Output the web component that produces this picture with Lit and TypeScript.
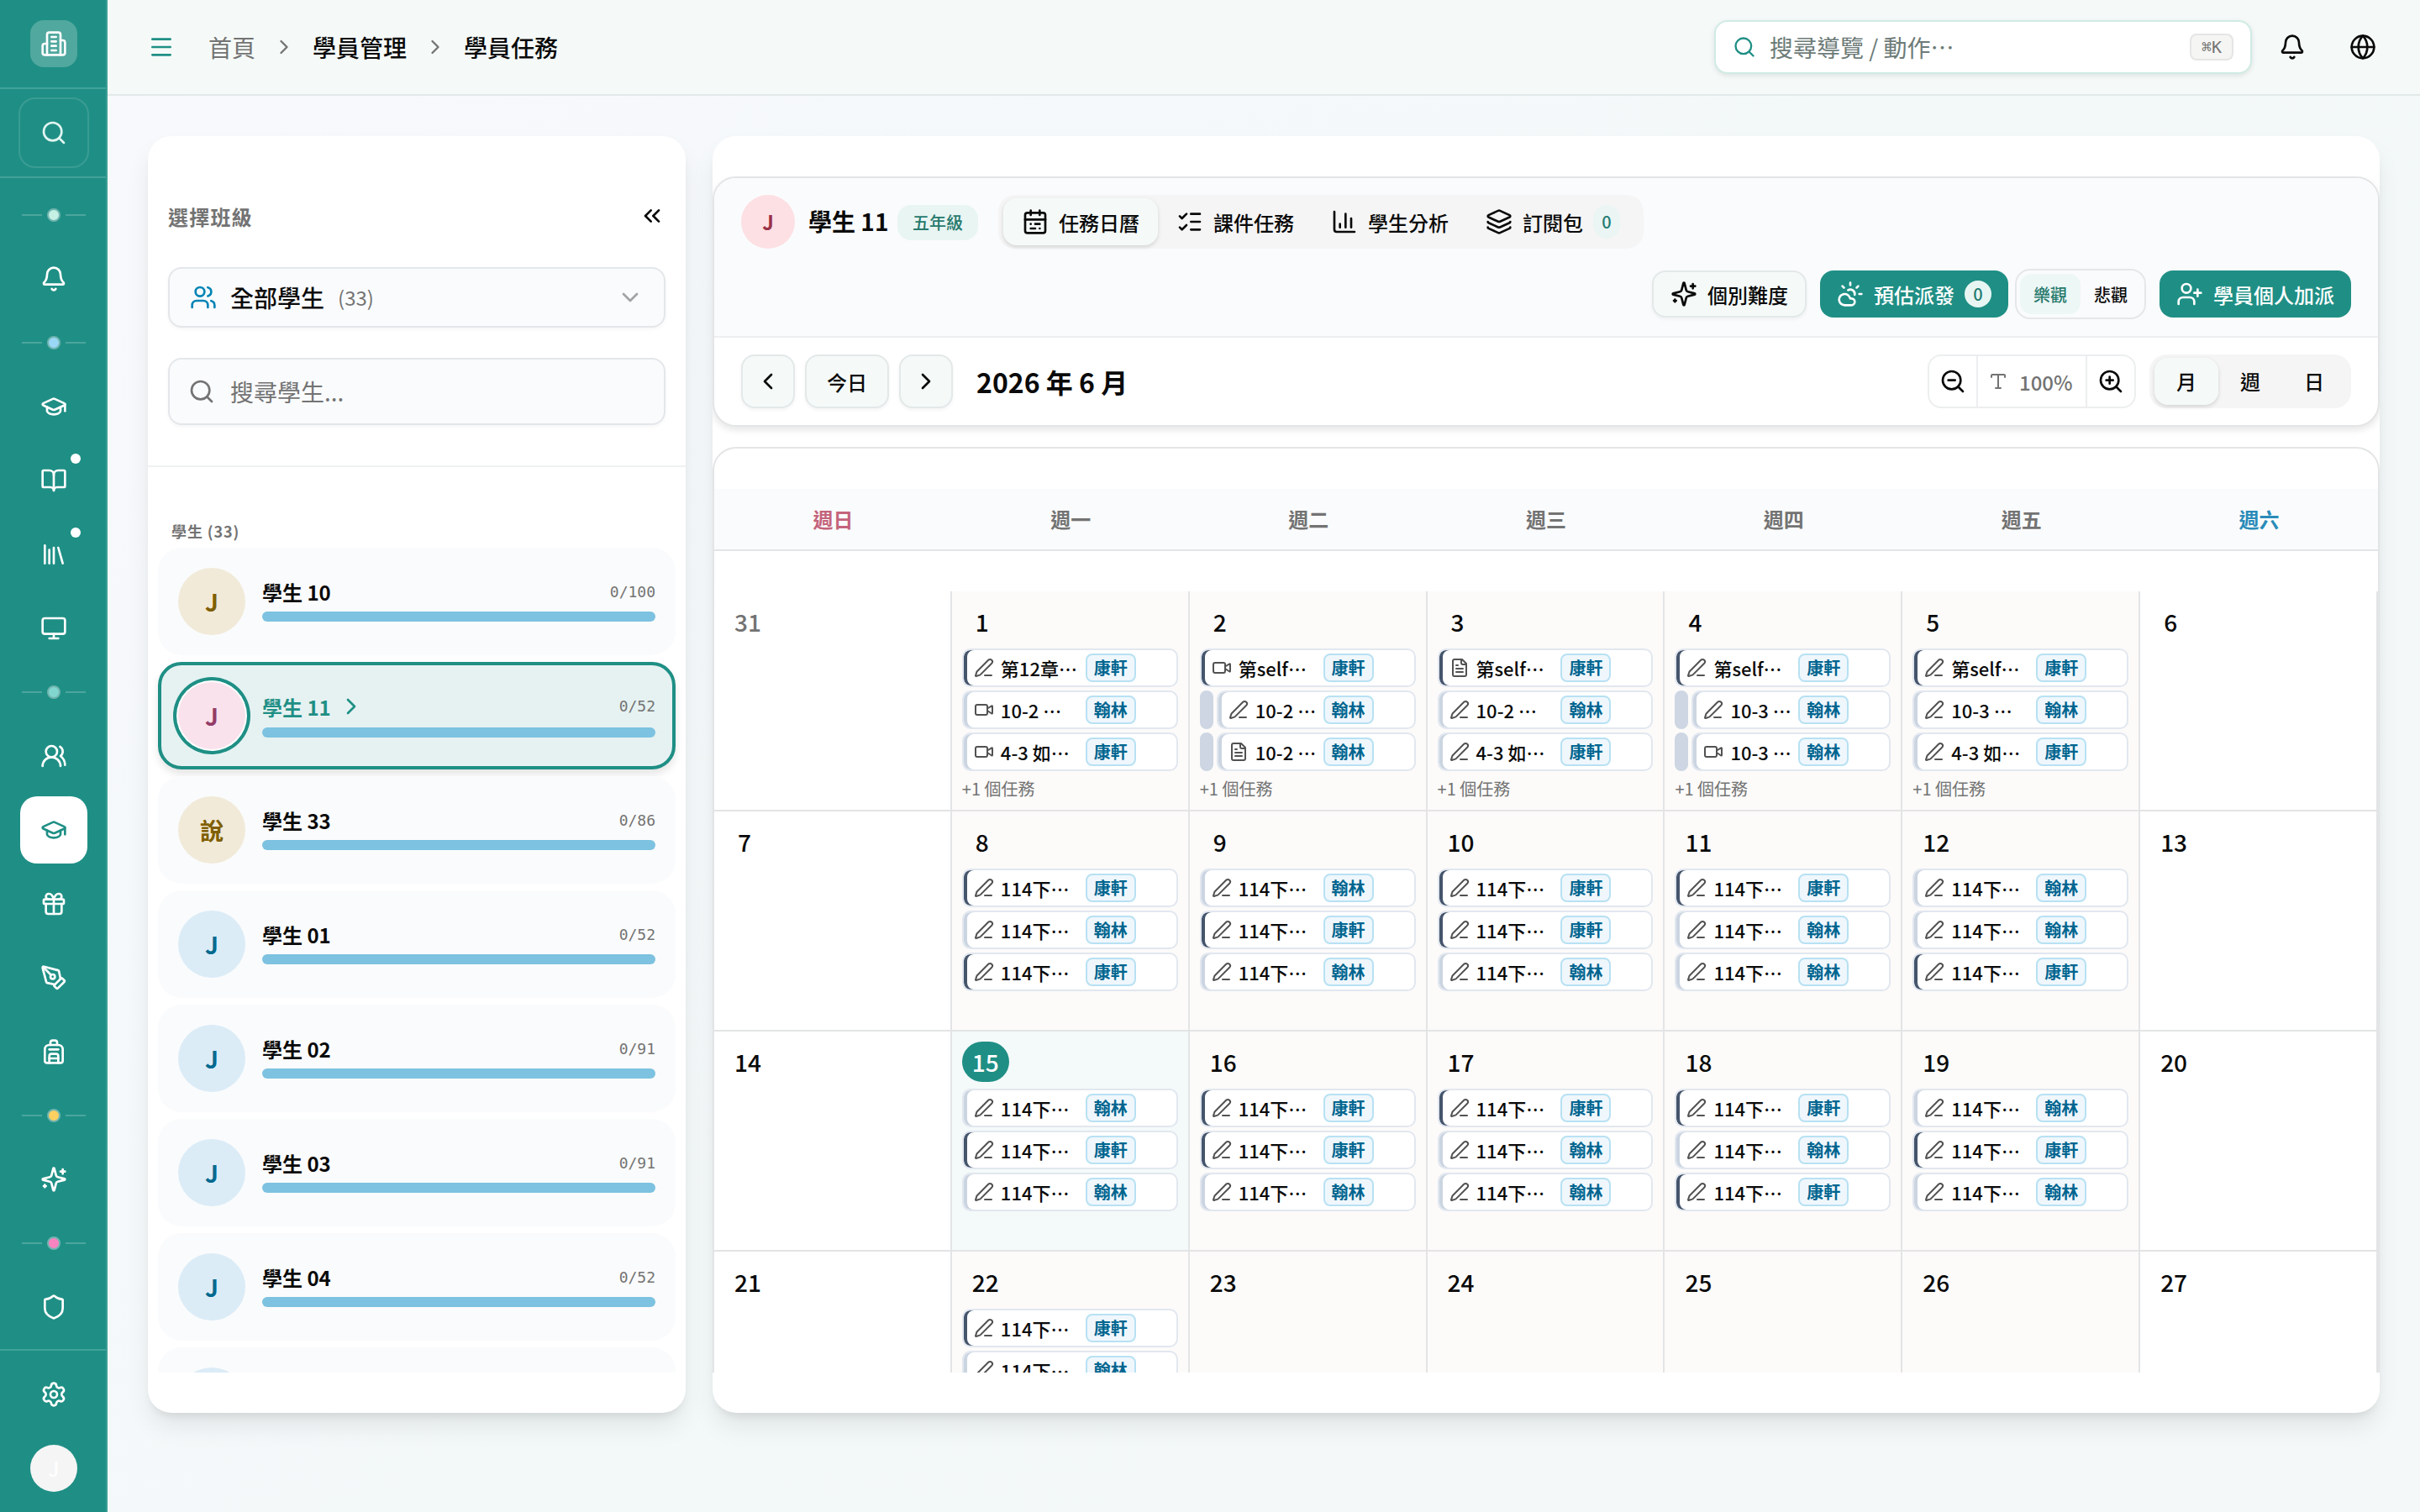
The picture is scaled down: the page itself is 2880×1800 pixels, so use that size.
import { LitElement, css, html, svg, nothing } from 'lit';
import { customElement, property } from 'lit/decorators.js';
import { classMap } from 'lit/directives/class-map.js';

const icons: Record<string, unknown> = {
  building: svg`<path d="M6 22V4a2 2 0 0 1 2-2h8a2 2 0 0 1 2 2v18Z"/><path d="M6 12H4a2 2 0 0 0-2 2v6a2 2 0 0 0 2 2h2"/><path d="M18 9h2a2 2 0 0 1 2 2v9a2 2 0 0 1-2 2h-2"/><path d="M10 6h4M10 10h4M10 14h4M10 18h4"/>`,
  search: svg`<circle cx="11" cy="11" r="8"/><path d="m21 21-4.3-4.3"/>`,
  bell: svg`<path d="M10.268 21a2 2 0 0 0 3.464 0"/><path d="M3.262 15.326A1 1 0 0 0 4 17h16a1 1 0 0 0 .74-1.673C19.41 13.956 18 12.499 18 8A6 6 0 0 0 6 8c0 4.499-1.411 5.956-2.738 7.326"/>`,
  cap: svg`<path d="M21.42 10.922a1 1 0 0 0-.019-1.838L12.83 5.18a2 2 0 0 0-1.66 0L2.6 9.08a1 1 0 0 0 0 1.832l8.57 3.908a2 2 0 0 0 1.66 0z"/><path d="M22 10v6"/><path d="M6 12.5V16a6 3 0 0 0 12 0v-3.5"/>`,
  book: svg`<path d="M12 7v14"/><path d="M3 18a1 1 0 0 1-1-1V4a1 1 0 0 1 1-1h5a4 4 0 0 1 4 4 4 4 0 0 1 4-4h5a1 1 0 0 1 1 1v13a1 1 0 0 1-1 1h-6a3 3 0 0 0-3 3 3 3 0 0 0-3-3z"/>`,
  library: svg`<path d="m16 6 4 14"/><path d="M12 6v14"/><path d="M8 8v12"/><path d="M4 4v16"/>`,
  monitor: svg`<rect width="20" height="14" x="2" y="3" rx="2"/><path d="M8 21h8M12 17v4"/>`,
  usersRound: svg`<path d="M18 21a8 8 0 0 0-16 0"/><circle cx="10" cy="8" r="5"/><path d="M22 20c0-3.37-2-6.5-4-8a5 5 0 0 0-.45-8.3"/>`,
  users: svg`<path d="M16 21v-2a4 4 0 0 0-4-4H6a4 4 0 0 0-4 4v2"/><circle cx="9" cy="7" r="4"/><path d="M22 21v-2a4 4 0 0 0-3-3.87"/><path d="M16 3.13a4 4 0 0 1 0 7.75"/>`,
  gift: svg`<rect x="3" y="8" width="18" height="4" rx="1"/><path d="M12 8v13"/><path d="M19 12v7a2 2 0 0 1-2 2H7a2 2 0 0 1-2-2v-7"/><path d="M7.5 8a2.5 2.5 0 0 1 0-5A4.8 8 0 0 1 12 8a4.8 8 0 0 1 4.5-5 2.5 2.5 0 0 1 0 5"/>`,
  pen: svg`<path d="M15.707 21.293a1 1 0 0 1-1.414 0l-1.586-1.586a1 1 0 0 1 0-1.414l5.586-5.586a1 1 0 0 1 1.414 0l1.586 1.586a1 1 0 0 1 0 1.414z"/><path d="m18 13-1.375-6.874a1 1 0 0 0-.746-.776L3.235 2.028a1 1 0 0 0-1.207 1.207L5.35 15.879a1 1 0 0 0 .776.746L13 18"/><path d="m2.3 2.3 7.286 7.286"/><circle cx="11" cy="11" r="2"/>`,
  backpack: svg`<path d="M4 10a4 4 0 0 1 4-4h8a4 4 0 0 1 4 4v10a2 2 0 0 1-2 2H6a2 2 0 0 1-2-2z"/><path d="M8 10h8"/><path d="M8 18h8"/><path d="M8 22v-6a2 2 0 0 1 2-2h4a2 2 0 0 1 2 2v6"/><path d="M9 6V4a2 2 0 0 1 2-2h2a2 2 0 0 1 2 2v2"/>`,
  sparkles: svg`<path d="M9.937 15.5A2 2 0 0 0 8.5 14.063l-6.135-1.582a.5.5 0 0 1 0-.962L8.5 9.936A2 2 0 0 0 9.937 8.5l1.582-6.135a.5.5 0 0 1 .963 0L14.063 8.5A2 2 0 0 0 15.5 9.937l6.135 1.581a.5.5 0 0 1 0 .964L15.5 14.063a2 2 0 0 0-1.437 1.437l-1.582 6.135a.5.5 0 0 1-.963 0z"/><path d="M20 3v4M22 5h-4M4 17v2M5 18H3"/>`,
  shield: svg`<path d="M20 13c0 5-3.5 7.5-7.66 8.95a1 1 0 0 1-.67-.01C7.5 20.5 4 18 4 13V6a1 1 0 0 1 1-1c2 0 4.5-1.2 6.24-2.72a1.17 1.17 0 0 1 1.52 0C14.51 3.81 17 5 19 5a1 1 0 0 1 1 1z"/>`,
  settings: svg`<path d="M9.671 4.136a2.34 2.34 0 0 1 4.659 0 2.34 2.34 0 0 0 3.319 1.915 2.34 2.34 0 0 1 2.33 4.033 2.34 2.34 0 0 0 0 3.831 2.34 2.34 0 0 1-2.33 4.033 2.34 2.34 0 0 0-3.319 1.915 2.34 2.34 0 0 1-4.659 0 2.34 2.34 0 0 0-3.32-1.915 2.34 2.34 0 0 1-2.33-4.033 2.34 2.34 0 0 0 0-3.831A2.34 2.34 0 0 1 6.35 6.051a2.34 2.34 0 0 0 3.319-1.915"/><circle cx="12" cy="12" r="3"/>`,
  menu: svg`<path d="M4 5h16M4 12h16M4 19h16"/>`,
  right: svg`<path d="m9 18 6-6-6-6"/>`,
  left: svg`<path d="m15 18-6-6 6-6"/>`,
  down: svg`<path d="m6 9 6 6 6-6"/>`,
  collapse: svg`<path d="m11 17-5-5 5-5"/><path d="m18 17-5-5 5-5"/>`,
  globe: svg`<circle cx="12" cy="12" r="10"/><path d="M12 2a14.5 14.5 0 0 0 0 20 14.5 14.5 0 0 0 0-20"/><path d="M2 12h20"/>`,
  calendar: svg`<path d="M8 2v4M16 2v4"/><rect width="18" height="18" x="3" y="4" rx="2"/><path d="M3 10h18"/><path d="M8 14h.01M12 14h4M8 18h4M16 18h.01"/>`,
  checks: svg`<path d="M13 5h8M13 12h8M13 19h8"/><path d="m3 17 2 2 4-4"/><path d="m3 7 2 2 4-4"/>`,
  chart: svg`<path d="M3 3v16a2 2 0 0 0 2 2h16"/><path d="M18 17V9M13 17V5M8 17v-3"/>`,
  layers: svg`<path d="M12.83 2.18a2 2 0 0 0-1.66 0L2.6 6.08a1 1 0 0 0 0 1.83l8.58 3.91a2 2 0 0 0 1.66 0l8.58-3.9a1 1 0 0 0 0-1.83z"/><path d="M2 12a1 1 0 0 0 .58.91l8.6 3.91a2 2 0 0 0 1.65 0l8.58-3.9A1 1 0 0 0 22 12"/><path d="M2 17a1 1 0 0 0 .58.91l8.6 3.91a2 2 0 0 0 1.65 0l8.58-3.9A1 1 0 0 0 22 17"/>`,
  cloudSun: svg`<path d="M12 2v2"/><path d="m4.93 4.93 1.41 1.41"/><path d="M20 12h2"/><path d="m19.07 4.93-1.41 1.41"/><path d="M15.947 12.65a4 4 0 0 0-5.925-4.128"/><path d="M13 22H7a5 5 0 1 1 4.9-6H13a3 3 0 0 1 0 6Z"/>`,
  userPlus: svg`<path d="M16 21v-2a4 4 0 0 0-4-4H6a4 4 0 0 0-4 4v2"/><circle cx="9" cy="7" r="4"/><path d="M19 8v6M22 11h-6"/>`,
  zoomOut: svg`<circle cx="11" cy="11" r="8"/><path d="m21 21-4.35-4.35M8 11h6"/>`,
  zoomIn: svg`<circle cx="11" cy="11" r="8"/><path d="m21 21-4.35-4.35M11 8v6M8 11h6"/>`,
  type: svg`<path d="M12 4v16"/><path d="M4 7V5a1 1 0 0 1 1-1h14a1 1 0 0 1 1 1v2"/><path d="M9 20h6"/>`,
  pencil: svg`<path d="M13 21h8"/><path d="M21.174 6.812a1 1 0 0 0-3.986-3.987L3.842 16.174a2 2 0 0 0-.5.83l-1.321 4.352a.5.5 0 0 0 .623.622l4.353-1.32a2 2 0 0 0 .83-.497z"/>`,
  video: svg`<path d="m16 13 5.223 3.482a.5.5 0 0 0 .777-.416V7.87a.5.5 0 0 0-.752-.432L16 10.5"/><rect x="2" y="6" width="14" height="12" rx="2"/>`,
  file: svg`<path d="M15 2H6a2 2 0 0 0-2 2v16a2 2 0 0 0 2 2h12a2 2 0 0 0 2-2V7Z"/><path d="M14 2v4a2 2 0 0 0 2 2h4"/><path d="M10 9H8M16 13H8M16 17H8"/>`,
};

const icon = (name: string, size = 32) => html`
  <svg width=${size} height=${size} viewBox="0 0 24 24" fill="none" stroke="currentColor"
    stroke-width="2" stroke-linecap="round" stroke-linejoin="round">${icons[name]}</svg>
`;

type NavEntry = { icon?: string; dot?: string; badge?: boolean; active?: boolean };

const nav: NavEntry[] = [
  { dot: 'mint' },
  { icon: 'bell' },
  { dot: 'sky' },
  { icon: 'cap' },
  { icon: 'book', badge: true },
  { icon: 'library', badge: true },
  { icon: 'monitor' },
  { dot: 'aqua' },
  { icon: 'usersRound' },
  { icon: 'cap', active: true },
  { icon: 'gift' },
  { icon: 'pen' },
  { icon: 'backpack' },
  { dot: 'amber' },
  { icon: 'sparkles' },
  { dot: 'pink' },
  { icon: 'shield' },
];

const students = [
  { name: '學生 10', initial: 'J', tone: 'sand', count: '0/100' },
  { name: '學生 11', initial: 'J', tone: 'rose', count: '0/52', selected: true },
  { name: '學生 33', initial: '說', tone: 'sand', count: '0/86' },
  { name: '學生 01', initial: 'J', tone: 'blue', count: '0/52' },
  { name: '學生 02', initial: 'J', tone: 'blue', count: '0/91' },
  { name: '學生 03', initial: 'J', tone: 'blue', count: '0/91' },
  { name: '學生 04', initial: 'J', tone: 'blue', count: '0/52' },
  // only the top edge of this row shows above the fold
  { name: '', initial: '', tone: 'blue', count: '' },
];

type Task = { kind: string; title: string; pub: string; dark?: boolean; linked?: boolean };

const K = '康軒';
const H = '翰林';
const task = (kind: string, title: string, pub: string, dark = false, linked = false): Task =>
  ({ kind, title, pub, dark, linked });
const review = (...pubs: string[]) => pubs.map((p) => task('pencil', '114下', p, p === K));

const tasks: Record<number, Task[]> = {
  1: [task('pencil', '第12章', K, true), task('video', '10-2 ', H), task('video', '4-3 如', K)],
  2: [task('video', '第self', K, true), task('pencil', '10-2 ', H, false, true), task('file', '10-2 ', H, false, true)],
  3: [task('file', '第self', K, true), task('pencil', '10-2 ', H), task('pencil', '4-3 如', K)],
  4: [task('pencil', '第self', K, true), task('pencil', '10-3 ', H, false, true), task('video', '10-3 ', H, false, true)],
  5: [task('pencil', '第self', K, true), task('pencil', '10-3 ', H), task('pencil', '4-3 如', K)],
  8: review(K, H, K),
  9: review(H, K, H),
  10: review(K, K, H),
  11: review(K, H, H),
  12: review(H, H, K),
  15: review(H, K, H),
  16: review(K, K, H),
  17: review(K, H, H),
  18: review(K, H, K),
  19: review(H, K, H),
  22: review(K, H),
};

const base = css`
  * { box-sizing: border-box; }
  svg { display: block; flex: none; }
`;

@customElement('side-nav')
export class SideNav extends LitElement {
  static styles = [base, css`
    :host {
      display: flex;
      flex-direction: column;
      box-sizing: border-box;
      width: 128px;
      height: 1800px;
      background: #1f8f85;
      border-right: 2px solid #3c9e95;
      color: #fff;
    }

    .brand, .find {
      display: flex;
      align-items: center;
      justify-content: center;
      height: 106px;
      padding-left: 2px;
      border-bottom: 2px solid #42a198;
    }

    .logo {
      display: flex;
      align-items: center;
      justify-content: center;
      width: 56px;
      height: 56px;
      border-radius: 16px;
      background: #51a89f;
    }

    .search {
      display: flex;
      align-items: center;
      justify-content: center;
      width: 84px;
      height: 84px;
      border: 2px solid #3a9c93;
      border-radius: 20px;
      color: #e0f5f1;
    }

    .list {
      display: flex;
      flex-direction: column;
      align-items: center;
      flex: 1;
      padding: 8px 0 0 2px;
    }

    .item {
      position: relative;
      display: flex;
      align-items: center;
      justify-content: center;
      width: 80px;
      height: 80px;
      border-radius: 20px;
    }
    .item + .item { margin-top: 8px; }
    .item.active { background: #fff; color: #1f8f85; }

    .badge {
      position: absolute;
      top: 8px;
      right: 8px;
      width: 12px;
      height: 12px;
      border-radius: 50%;
      background: #fff;
    }

    .sep {
      display: flex;
      align-items: center;
      gap: 6px;
      height: 72px;
    }
    .sep::before, .sep::after {
      content: '';
      width: 24px;
      height: 2px;
      background: #4ca59d;
    }
    .dot {
      width: 16px;
      height: 16px;
      border: 2px solid #72b5b0;
      border-radius: 50%;
    }
    .mint { background: #c4f1e4; }
    .sky { background: #9ad8f5; }
    .aqua { background: #82d6d0; }
    .amber { background: #fcd060; }
    .pink { background: #f784c0; }

    .foot {
      display: flex;
      flex-direction: column;
      align-items: center;
      height: 194px;
      padding: 12px 0 0 2px;
      border-top: 2px solid #42a198;
    }
    .me {
      width: 56px;
      height: 56px;
      border-radius: 50%;
      background: #f5f5f5;
      color: #fff;
      font-size: 24px;
      line-height: 56px;
      text-align: center;
    }
  `];

  render() {
    return html`
      <div class="brand"><div class="logo">${icon('building')}</div></div>
      <div class="find"><div class="search">${icon('search')}</div></div>
      <div class="list">
        ${nav.map((n) => n.dot
          ? html`<div class="sep"><span class="dot ${n.dot}"></span></div>`
          : html`<div class=${classMap({ item: true, active: !!n.active })}>
              ${icon(n.icon!)}
              ${n.badge ? html`<span class="badge"></span>` : nothing}
            </div>`)}
      </div>
      <div class="foot">
        <div class="item">${icon('settings')}</div>
        <div class="item"><div class="me">J</div></div>
      </div>
    `;
  }
}

@customElement('top-bar')
export class TopBar extends LitElement {
  static styles = [base, css`
    :host {
      display: flex;
      align-items: center;
      box-sizing: border-box;
      height: 114px;
      padding: 0 52px 0 48px;
      border-bottom: 2px solid #e2e9e9;
      background: #f5faf8;
      font-size: 28px;
    }

    .toggle { color: #1f8f85; }

    .crumbs {
      display: flex;
      align-items: center;
      gap: 20px;
      margin-left: 40px;
      flex: 1;
      color: #0a0a0a;
      font-weight: 500;
    }
    .crumbs svg { color: #737373; }
    .home { color: #737373; font-weight: 400; }

    .search {
      display: flex;
      align-items: center;
      gap: 16px;
      width: 640px;
      height: 64px;
      padding: 0 20px;
      border: 2px solid #d0ebe4;
      border-radius: 16px;
      background: #fff;
      box-shadow: 0 2px 6px rgb(0 0 0 / 10%);
      color: #6d7b78;
    }
    .search svg { color: #1f8f85; }
    .search span { flex: 1; }

    kbd {
      display: flex;
      align-items: center;
      justify-content: center;
      width: 52px;
      height: 32px;
      border: 2px solid #e5e5e5;
      border-radius: 8px;
      background: #f5f5f4;
      color: #737373;
      font: 20px 'DejaVu Sans Mono', monospace;
    }

    .bell { margin-left: 32px; }
    .globe { margin-left: 52px; }
  `];

  render() {
    return html`
      <div class="toggle">${icon('menu')}</div>
      <div class="crumbs">
        <span class="home">首頁</span>
        ${icon('right', 28)}
        <span>學員管理</span>
        ${icon('right', 28)}
        <span>學員任務</span>
      </div>
      <div class="search">${icon('search', 28)}<span>搜尋導覽 / 動作⋯</span><kbd>⌘K</kbd></div>
      <div class="bell">${icon('bell')}</div>
      <div class="globe">${icon('globe')}</div>
    `;
  }
}

@customElement('student-list')
export class StudentList extends LitElement {
  static styles = [base, css`
    :host {
      display: flex;
      flex-direction: column;
      box-sizing: border-box;
      width: 640px;
      padding: 48px 0;
      border-radius: 28px;
      background: #fff;
      box-shadow: 0 18px 30px -2px rgb(0 0 0 / 8%), 0 8px 12px -6px rgb(0 0 0 / 10%);
    }

    .filters {
      display: flex;
      flex-direction: column;
      height: 346px;
      padding: 24px 24px 0;
      border-bottom: 2px solid #f0f1f2;
    }

    .head {
      display: flex;
      align-items: center;
      justify-content: space-between;
      height: 46px;
      margin-bottom: 38px;
      color: #0a0a0a;
    }
    .head span {
      color: #737373;
      font-size: 24px;
      font-weight: 600;
      letter-spacing: 1.2px;
    }

    .field {
      display: flex;
      align-items: center;
      gap: 16px;
      border: 2px solid #e4e7ea;
      border-radius: 16px;
      background: #fafbfd;
      box-shadow: 0 2px 4px rgb(0 0 0 / 4%);
      font-size: 28px;
    }
    .select { height: 72px; padding: 0 24px; font-weight: 500; }
    .select .people { color: #0284b5; }
    .select .count {
      flex: 1;
      margin-bottom: 2px;
      color: #737373;
      font-size: 24px;
      font-weight: 400;
    }
    .select .caret { color: #a3a3a3; }
    .query { height: 80px; margin-top: 36px; padding: 0 22px; gap: 18px; color: #737373; }

    .students {
      flex: 1;
      min-height: 0;
      overflow: hidden;
      padding: 64px 12px 0;
    }
    .label {
      height: 32px;
      padding-left: 16px;
      color: #737373;
      font-size: 18px;
      font-weight: 600;
      line-height: 25px;
      letter-spacing: .9px;
    }

    .row {
      display: flex;
      align-items: center;
      gap: 20px;
      height: 128px;
      margin-bottom: 8px;
      padding: 0 24px;
      border-radius: 28px;
      background: #fafbfc;
    }
    .row.selected {
      padding: 0 20px;
      border: 4px solid #1f8f85;
      background: #e6f2f2;
      box-shadow: 0 6px 10px rgb(0 0 0 / 10%);
    }

    .avatar {
      display: flex;
      align-items: center;
      justify-content: center;
      width: 80px;
      height: 80px;
      border-radius: 50%;
      font-size: 28px;
      font-weight: 600;
    }
    .selected .avatar { box-shadow: 0 0 0 2px #fff, 0 0 0 6px #1f8f85; }
    .sand { background: #f1ead9; color: #7f5f00; }
    .rose { background: #f9e2ec; color: #943c67; }
    .blue { background: #dbecf7; color: #00698f; }

    .info { flex: 1; }
    .line {
      display: flex;
      align-items: center;
      height: 25px;
      margin-bottom: 11px;
    }
    .selected .line { height: 30px; margin-bottom: 10px; }
    .name { font-size: 24px; font-weight: 600; }
    .selected .name { color: #1f8f85; }
    .selected .line svg { margin-left: 8px; color: #1f8f85; }
    .total {
      flex: 1;
      margin-bottom: 1px;
      color: #737373;
      font-family: 'DejaVu Sans Mono', monospace;
      font-size: 18px;
      text-align: right;
    }
    .bar { height: 12px; border-radius: 6px; background: #7dc2e0; }
  `];

  render() {
    return html`
      <div class="filters">
        <div class="head"><span>選擇班級</span>${icon('collapse')}</div>
        <div class="field select">
          <span class="people">${icon('users')}</span>
          <span>全部學生</span>
          <span class="count">(33)</span>
          <span class="caret">${icon('down')}</span>
        </div>
        <div class="field query">${icon('search')}<span>搜尋學生...</span></div>
      </div>
      <div class="students">
        <div class="label">學生 (33)</div>
        ${students.map((s) => html`
          <div class=${classMap({ row: true, selected: !!s.selected })}>
            <div class="avatar ${s.tone}">${s.initial}</div>
            <div class="info">
              <div class="line">
                <span class="name">${s.name}</span>
                ${s.selected ? icon('right') : nothing}
                <span class="total">${s.count}</span>
              </div>
              <div class="bar"></div>
            </div>
          </div>
        `)}
      </div>
    `;
  }
}

@customElement('calendar-toolbar')
export class CalendarToolbar extends LitElement {
  static styles = [base, css`
    :host {
      display: block;
      flex: none;
      box-sizing: border-box;
      height: 298px;
      border: 2px solid #e3e5e6;
      border-radius: 28px;
      background: #fff;
      box-shadow: 0 4px 8px rgb(0 0 0 / 10%);
      overflow: hidden;
      font-size: 24px;
      font-weight: 500;
    }

    .top {
      display: flex;
      flex-direction: column;
      gap: 24px;
      height: 190px;
      padding: 20px 32px;
      border-bottom: 2px solid #eceeef;
      background: #fafbfd;
    }
    .row { display: flex; align-items: center; }

    .avatar {
      width: 64px;
      height: 64px;
      border-radius: 50%;
      background: #fde0e3;
      color: #9b3248;
      font-weight: 600;
      line-height: 64px;
      text-align: center;
    }
    .name {
      width: 106px;
      margin: 0 0 2px 16px;
      font-size: 28px;
      font-weight: 600;
      white-space: nowrap;
    }
    .grade {
      height: 42px;
      margin-top: 2px;
      padding: 0 18px;
      border-radius: 16px;
      background: #e8f5f3;
      color: #26796c;
      font-size: 20px;
      line-height: 42px;
    }

    .tabs {
      display: flex;
      height: 64px;
      margin-left: 24px;
      padding: 4px 6px;
      border-radius: 20px;
      background: #f5f5f5;
    }
    .tab {
      display: flex;
      align-items: center;
      gap: 12px;
      height: 56px;
      padding: 0 22px;
      border-radius: 16px;
    }
    .on { background: #f5faf9; box-shadow: 0 2px 5px rgb(0 0 0 / 14%); }
    .zero {
      width: 32px;
      height: 40px;
      border-radius: 16px;
      background: #eaf5f4;
      color: #1f7c72;
      font-size: 20px;
      line-height: 40px;
      text-align: center;
    }

    .actions { justify-content: flex-end; height: 60px; }
    .btn {
      display: flex;
      align-items: center;
      gap: 12px;
      height: 56px;
      padding: 0 20px;
      border-radius: 16px;
    }
    .outline {
      border: 2px solid #e3e8e8;
      background: #f5faf9;
      box-shadow: 0 2px 4px rgb(0 0 0 / 5%);
    }
    .solid { margin-left: 16px; background: #1f8f85; color: #fff; }
    .pill {
      width: 32px;
      height: 32px;
      border-radius: 50%;
      background: #e8f6f3;
      color: #1f7c72;
      font-size: 20px;
      line-height: 32px;
      text-align: center;
    }
    .mood {
      display: flex;
      height: 60px;
      margin-left: 8px;
      padding: 4px;
      border: 2px solid #e5e7e9;
      border-radius: 18px;
      font-size: 20px;
      line-height: 50px;
    }
    .mood span { padding: 0 16px; border-radius: 14px; }
    .mood .picked { background: #edf7f6; color: #26796c; }

    .bottom { gap: 12px; padding: 20px 32px; }
    .step {
      display: flex;
      align-items: center;
      justify-content: center;
      min-width: 64px;
      height: 64px;
      border: 2px solid #e3e8e8;
      border-radius: 16px;
      background: #f5faf9;
      box-shadow: 0 2px 4px rgb(0 0 0 / 5%);
    }
    .today { width: 100px; }
    .month { flex: 1; margin-left: 16px; font-size: 32px; font-weight: 700; }

    .zoom {
      display: flex;
      height: 64px;
      border: 2px solid #eceeef;
      border-radius: 16px;
    }
    .zoom > span {
      display: flex;
      align-items: center;
      justify-content: center;
      width: 56px;
    }
    .zoom .level {
      justify-content: flex-start;
      gap: 13px;
      width: 132px;
      padding-left: 12px;
      border: solid #eceeef;
      border-width: 0 2px;
      color: #737373;
    }

    .views {
      display: flex;
      height: 64px;
      margin-left: 4px;
      padding: 4px 6px;
      border-radius: 20px;
      background: #f5f5f5;
      line-height: 56px;
      text-align: center;
    }
    .views span { width: 76px; border-radius: 16px; }
  `];

  render() {
    return html`
      <div class="top">
        <div class="row">
          <div class="avatar">J</div>
          <div class="name">學生 11</div>
          <div class="grade">五年級</div>
          <div class="tabs">
            <div class="tab on">${icon('calendar')}任務日曆</div>
            <div class="tab">${icon('checks')}課件任務</div>
            <div class="tab">${icon('chart')}學生分析</div>
            <div class="tab">${icon('layers')}訂閱包<span class="zero">0</span></div>
          </div>
        </div>
        <div class="row actions">
          <div class="btn outline">${icon('sparkles')}個別難度</div>
          <div class="btn solid">${icon('cloudSun')}預估派發<span class="pill">0</span></div>
          <div class="mood"><span class="picked">樂觀</span><span>悲觀</span></div>
          <div class="btn solid">${icon('userPlus')}學員個人加派</div>
        </div>
      </div>
      <div class="row bottom">
        <div class="step">${icon('left')}</div>
        <div class="step today">今日</div>
        <div class="step">${icon('right')}</div>
        <div class="month">2026 年 6 月</div>
        <div class="zoom">
          <span>${icon('zoomOut')}</span>
          <span class="level">${icon('type', 24)}100%</span>
          <span>${icon('zoomIn')}</span>
        </div>
        <div class="views"><span class="on">月</span><span>週</span><span>日</span></div>
      </div>
    `;
  }
}

@customElement('task-chip')
export class TaskChip extends LitElement {
  @property({ attribute: false }) task!: Task;

  static styles = [base, css`
    :host { display: flex; gap: 4px; height: 46px; }

    .link { width: 16px; border-radius: 8px; background: #cdd6e2; }

    .chip {
      display: flex;
      align-items: center;
      flex: 1;
      min-width: 0;
      padding: 0 48px 0 12px;
      border: 2px solid #e2e7ef;
      border-radius: 10px;
      background: #fff;
      box-shadow: inset 4px 0 0 #cbd5e1;
    }
    .dark { box-shadow: inset 4px 0 0 #45556c; }

    svg { color: #525252; }
    .title {
      flex: 1;
      min-width: 0;
      margin: 0 12px 0 8px;
      color: #0a0a0a;
      font-size: 22px;
      font-weight: 500;
      white-space: nowrap;
    }
    .dots { display: inline-block; }

    .pub {
      flex: none;
      height: 34px;
      padding: 0 8px;
      border: 2px solid #b8e1f3;
      border-radius: 8px;
      background: #eff7fd;
      color: #00658f;
      font-size: 20px;
      font-weight: 600;
      line-height: 30px;
    }
  `];

  render() {
    const t = this.task;
    return html`
      ${t.linked ? html`<span class="link"></span>` : nothing}
      <div class=${classMap({ chip: true, dark: !!t.dark })}>
        ${icon(t.kind, 24)}
        <span class="title">${t.title}<span class="dots" lang="zh-TW">…</span></span>
        <span class="pub">${t.pub}</span>
      </div>
    `;
  }
}

@customElement('month-grid')
export class MonthGrid extends LitElement {
  static styles = [base, css`
    :host {
      display: block;
      flex: none;
      box-sizing: border-box;
      height: 1300px;
      margin-top: 24px;
      padding-top: 48px;
      border: 2px solid #e3e5e6;
      border-radius: 28px;
      background: #fff;
    }

    .grid { display: grid; grid-template-columns: repeat(7, 1fr); }

    .week {
      height: 74px;
      margin-bottom: 48px;
      border-bottom: 2px solid #e3e5e6;
      background: #fafbfc;
      color: #737373;
      font-size: 24px;
      font-weight: 600;
      line-height: 72px;
      text-align: center;
    }
    .sun { color: #c4637b; }
    .sat { color: #2a8bb8; }

    .day {
      height: 262px;
      min-width: 0;
      padding: 12px;
      border: solid #e3e4e5;
      border-width: 0 2px 2px 0;
      background: #fcfbfa;
    }
    .rest { background: #fff; }
    .now { background: #f4f9fa; }

    .num {
      display: inline-block;
      min-width: 48px;
      height: 48px;
      margin-bottom: 8px;
      padding: 0 12px;
      border-radius: 24px;
      font-size: 28px;
      font-weight: 500;
      line-height: 48px;
      text-align: center;
      vertical-align: top;
    }
    .out { color: #737373; }
    .now .num { background: #1f8f85; color: #fff; }

    .list { display: flex; flex-direction: column; gap: 4px; }
    .more { color: #737373; font-size: 20px; line-height: 33px; }
  `];

  render() {
    const days = [31, ...Array.from({ length: 27 }, (_, i) => i + 1)];
    return html`
      <div class="grid week">
        ${['日', '一', '二', '三', '四', '五', '六'].map((d) => html`
          <span class=${classMap({ sun: d === '日', sat: d === '六' })}>週${d}</span>
        `)}
      </div>
      <div class="grid">
        ${days.map((d, i) => html`
          <div class=${classMap({ day: true, rest: i % 7 === 0 || i % 7 === 6, now: d === 15 })}>
            <span class=${classMap({ num: true, out: i === 0 })}>${d}</span>
            <div class="list">
              ${(tasks[d] ?? []).map((t) => html`<task-chip .task=${t}></task-chip>`)}
              ${d < 6 ? html`<div class="more">+1 個任務</div>` : nothing}
            </div>
          </div>
        `)}
      </div>
    `;
  }
}

@customElement('app-root')
export class AppRoot extends LitElement {
  static styles = [base, css`
    :host {
      display: flex;
      width: 2880px;
      height: 1800px;
      overflow: hidden;
      background: linear-gradient(135deg, #f8f9fc, #f3f8f9 50%, #f4f8f9);
      color: #0a0a0a;
      font-family: 'Noto Sans CJK TC', sans-serif;
    }

    .page { display: flex; flex-direction: column; flex: 1; min-width: 0; }

    .content {
      display: flex;
      gap: 32px;
      height: 1616px;
      padding: 48px;
    }

    .panel {
      flex: 1;
      min-width: 0;
      padding: 48px 0;
      border-radius: 28px;
      background: #fff;
      box-shadow: 0 18px 30px -2px rgb(0 0 0 / 8%), 0 8px 12px -6px rgb(0 0 0 / 10%);
    }
    .scroll {
      display: flex;
      flex-direction: column;
      height: 100%;
      overflow: hidden;
    }
  `];

  render() {
    return html`
      <side-nav></side-nav>
      <div class="page">
        <top-bar></top-bar>
        <div class="content">
          <student-list></student-list>
          <div class="panel">
            <div class="scroll">
              <calendar-toolbar></calendar-toolbar>
              <month-grid></month-grid>
            </div>
          </div>
        </div>
      </div>
    `;
  }
}
